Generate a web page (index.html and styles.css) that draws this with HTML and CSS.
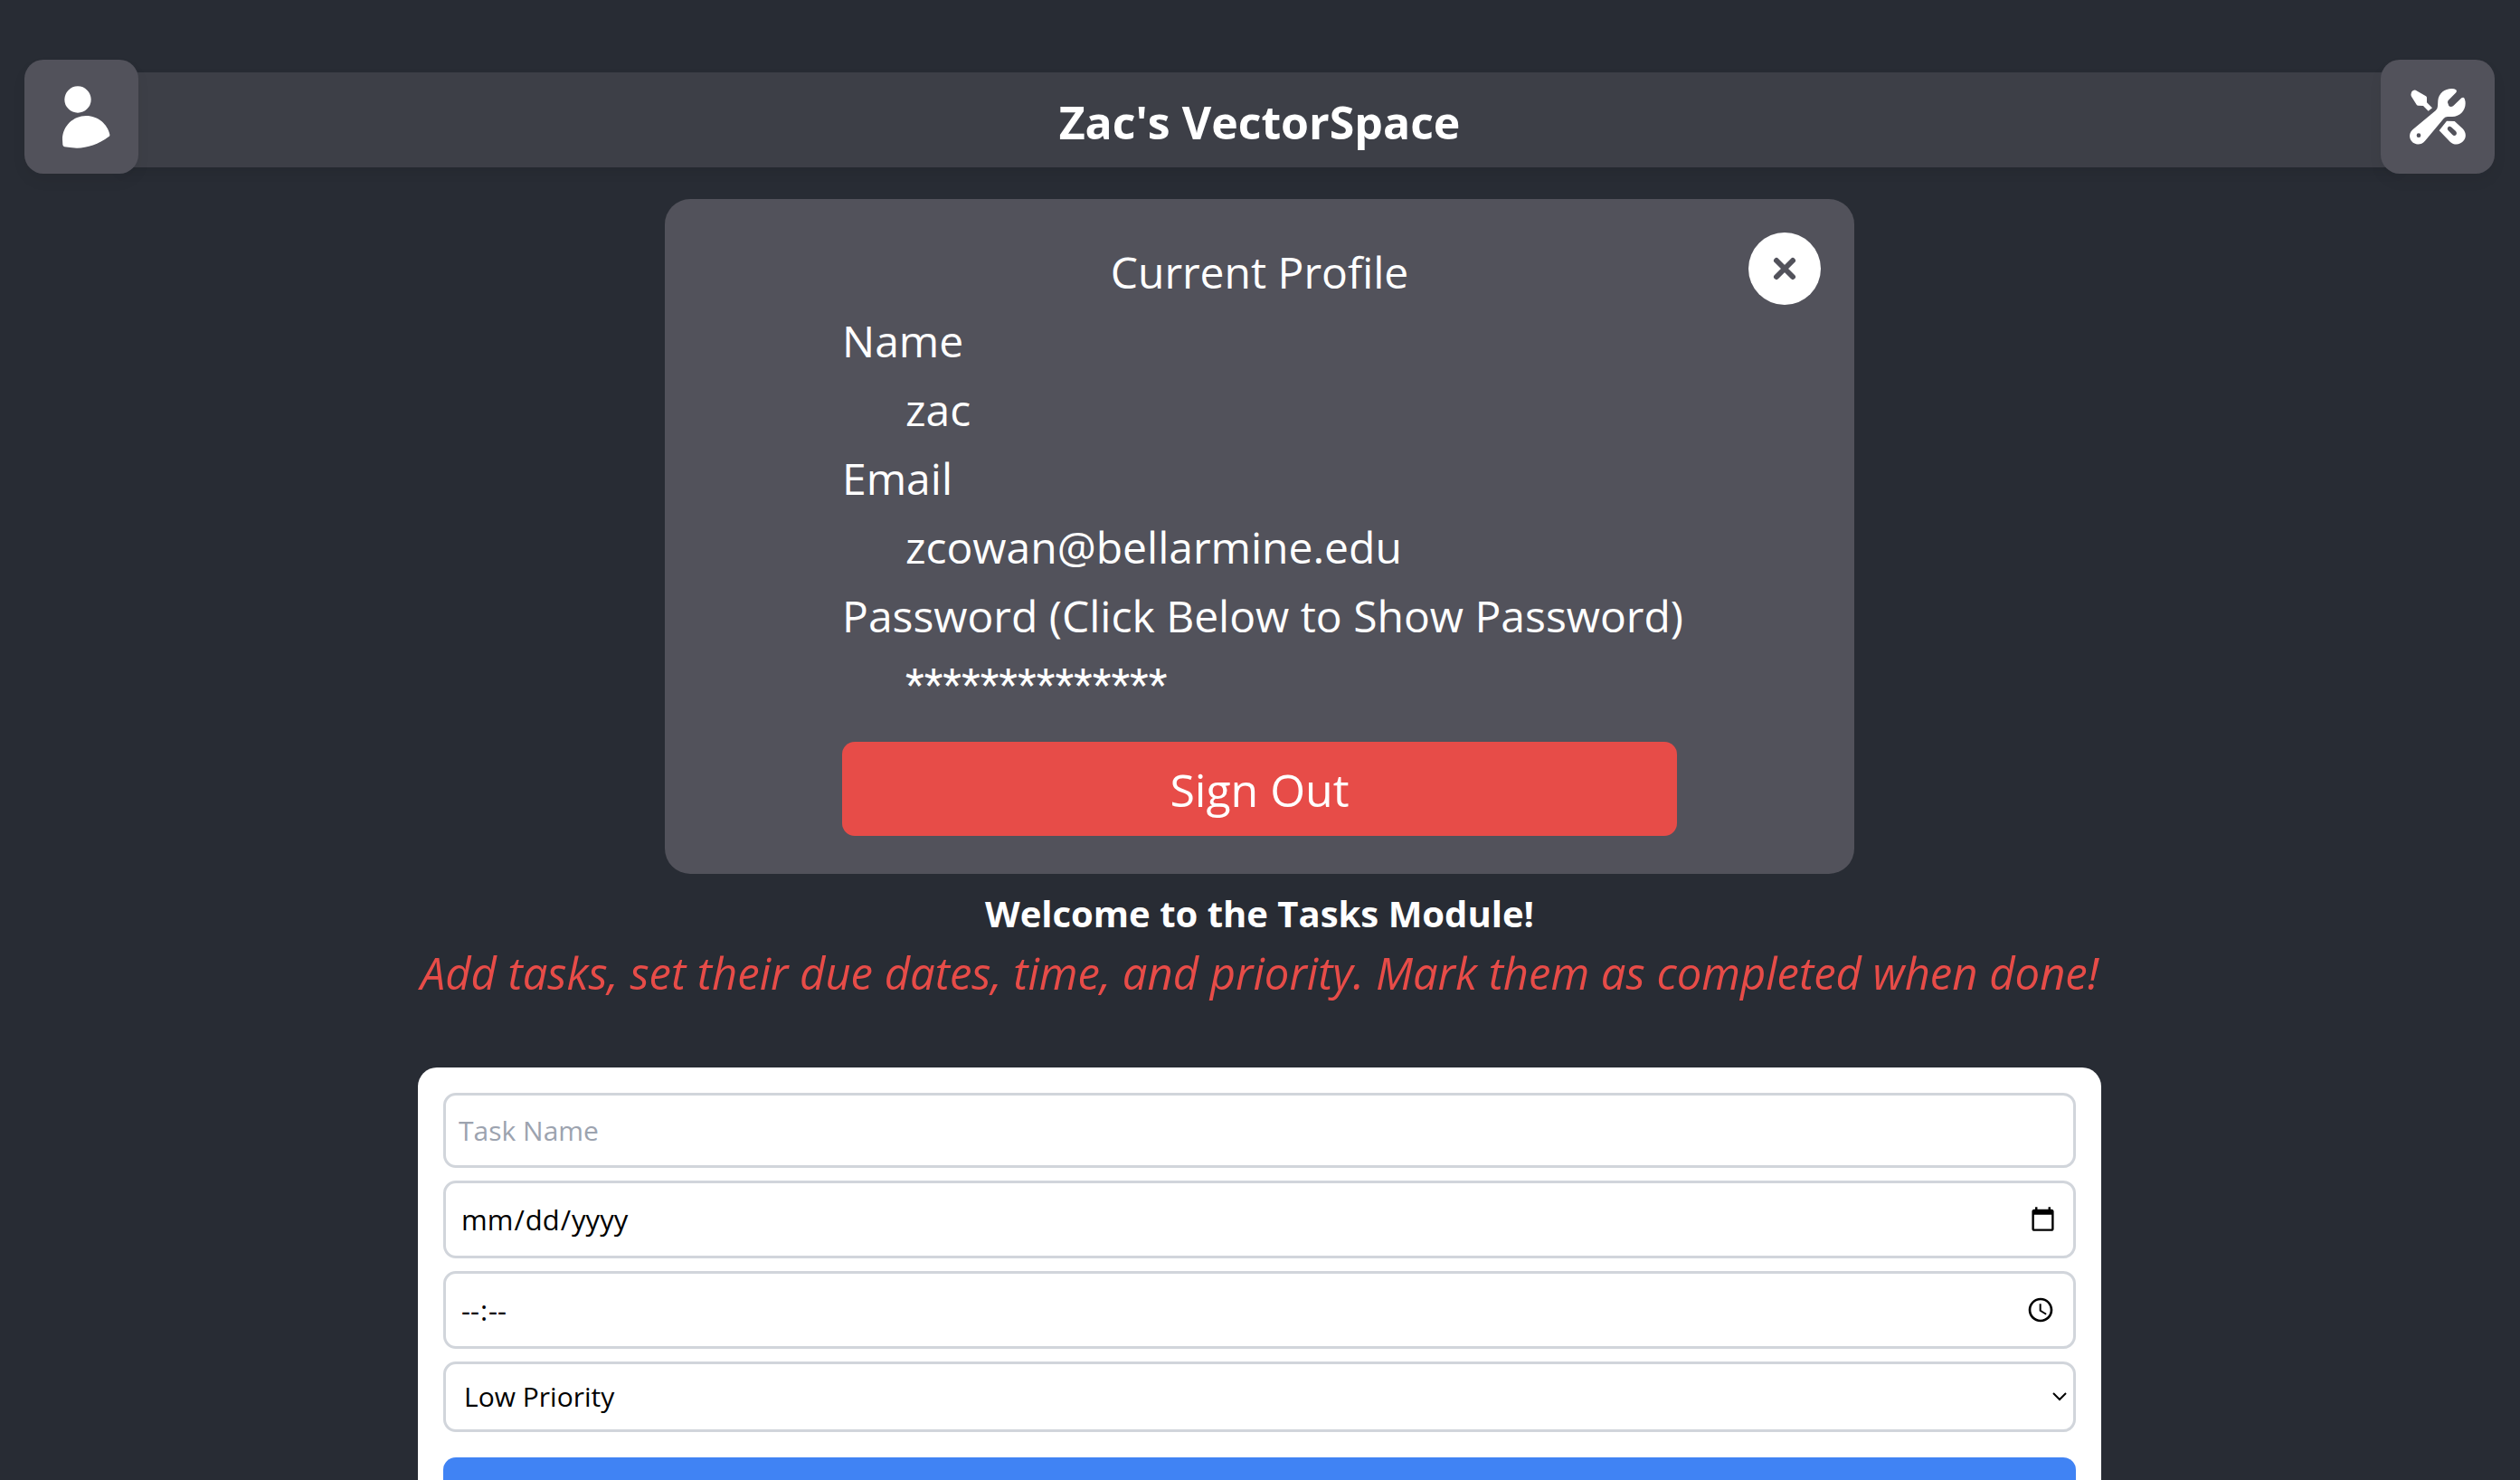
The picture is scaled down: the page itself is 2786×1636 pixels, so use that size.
FILE: index.html
```html
<!DOCTYPE html>
<html lang="en">
<head>
  <meta charset="utf-8">
  <meta name="viewport" content="width=device-width, initial-scale=1">
  <title>Zac's VectorSpace</title>
  <link rel="stylesheet" href="styles.css">
</head>
<body>
  <header class="topbar">
    <button class="icon-button" type="button" aria-label="Profile">
      <svg viewBox="81 78 378 378" aria-hidden="true">
        <circle cx="258" cy="210" r="44"/>
        <path d="M207 343C207 298 243 264 286 264C325 264 357 292 364 326Q365 331 361 333C327 358 290 371 255 371Q230 370 214 367Q209 366 208 360Z"/>
      </svg>
    </button>
    <div class="title-bar"><h1 class="title">Zac's VectorSpace</h1></div>
    <button class="icon-button" type="button" aria-label="Tools">
      <svg viewBox="216 78 378 378" aria-hidden="true">
        <path d="M317 190L319 184Q325 177 332 179L366 199Q369 201 369 204V220L387 238L374 248L357 231L340 230Q337 230 335 227L318 200Q315 195 317 190Z"/>
        <path fill-rule="evenodd" d="M466 178Q470 182 466 187L440 213Q438 216 438 220L442 231Q444 234 450 234L456 232L484 205Q491 201 494 207Q497 215 497 223C497 248 478 267 453 267H438Q430 267 425 273L363 347C350 362 330 362 319 349C309 337 310 320 323 309L398 247Q405 241 405 232L406 213C408 190 428 174 452 174Q460 174 466 178ZM342 322A7 7 0 1 0 342 336A7 7 0 1 0 342 322Z"/>
        <path fill-rule="evenodd" d="M410 313L435 281L461 282L488 307C501 321 500 338 489 349C478 361 459 362 446 350ZM440 301C436 305 437 309 440 313L454 327C458 331 463 330 466 327C469 323 468 319 465 315L451 302C447 299 443 299 440 301Z"/>
      </svg>
    </button>
  </header>

  <main class="content">
    <section class="profile">
      <button class="close" type="button" aria-label="Close">
        <svg viewBox="0 0 80 80" aria-hidden="true"><path d="M31 31L49 49M49 31L31 49"/></svg>
      </button>
      <h2 class="profile-title">Current Profile</h2>
      <dl class="details">
        <dt>Name</dt>
        <dd>zac</dd>
        <dt>Email</dt>
        <dd>zcowan@bellarmine.edu</dd>
        <dt>Password (Click Below to Show Password)</dt>
        <dd class="masked">**************</dd>
      </dl>
      <button class="sign-out" type="button">Sign Out</button>
    </section>

    <h2 class="welcome">Welcome to the Tasks Module!</h2>
    <p class="intro">Add tasks, set their due dates, time, and priority. Mark them as completed when done!</p>

    <form class="task-form">
      <input class="field field-name" type="text" placeholder="Task Name" aria-label="Task name">
      <input class="field field-picker" type="date" aria-label="Due date">
      <input class="field field-picker" type="time" aria-label="Due time">
      <div class="select-wrap">
        <select class="field field-select" aria-label="Priority">
          <option>Low Priority</option>
          <option>Medium Priority</option>
          <option>High Priority</option>
        </select>
        <svg class="chevron" viewBox="0 0 16 10" aria-hidden="true"><path d="M1 1L8 8L15 1"/></svg>
      </div>
      <button class="add" type="submit" aria-label="Add task"></button>
    </form>
  </main>
</body>
</html>
```
FILE: styles.css
```css
* {
  box-sizing: border-box;
  margin: 0;
}

body {
  height: 100vh;
  overflow: hidden;
  padding: 66px 28px 0 27px;
  background: #282c34;
  color: #fff;
  font-family: "Open Sans", "Noto Sans", sans-serif;
  font-size: 48px;
  line-height: 76px;
}

button,
input,
select {
  font: inherit;
  border: 0;
}

.topbar {
  display: flex;
  align-items: center;
}

.icon-button {
  flex: none;
  width: 126px;
  height: 126px;
  padding: 0;
  border-radius: 21px;
  background: #52525b;
  box-shadow: 0 8px 16px rgba(0, 0, 0, 0.05);
  z-index: 1;
}

.icon-button svg {
  display: block;
  fill: #fff;
}

.title-bar {
  flex: 1;
  height: 105px;
  margin: 7px -21px 0;
  background: #3d3f47;
  box-shadow: 0 6px 12px rgba(0, 0, 0, 0.08);
}

.title {
  font-size: 50px;
  line-height: 110px;
  text-align: center;
}

.content {
  display: flex;
  flex-direction: column;
  align-items: center;
}

.profile {
  position: relative;
  display: flex;
  flex-direction: column;
  width: 100%;
  max-width: 1315px;
  margin-top: 28px;
  padding: 43px 196px 42px;
  border-radius: 28px;
  background: #52525b;
}

.close {
  position: absolute;
  top: 37px;
  right: 37px;
  width: 80px;
  height: 80px;
  padding: 0;
  border-radius: 50%;
  background: #fff;
}

.close svg {
  display: block;
  fill: none;
  stroke: #52525b;
  stroke-width: 6;
  stroke-linecap: round;
}

.profile-title {
  font-size: 48px;
  font-weight: 400;
  text-align: center;
}

.details {
  white-space: nowrap;
}

.details dd {
  margin-left: 70px;
}

.details .masked {
  font-family: Roboto, sans-serif;
}

.sign-out {
  height: 104px;
  margin-top: 25px;
  padding: 2px 0 0;
  border-radius: 14px;
  background: #e74c48;
  color: #fff;
  font-size: 50px;
}

.welcome {
  margin-top: 14px;
  font-size: 40px;
  line-height: 60px;
}

.intro {
  color: #e74c48;
  font-size: 49px;
  font-style: italic;
  line-height: 70px;
  white-space: nowrap;
}

.task-form {
  display: flex;
  flex-direction: column;
  gap: 14px;
  width: 100%;
  max-width: 1861px;
  margin-top: 70px;
  padding: 28px;
  border-radius: 21px;
  background: #fff;
  color: #000;
  font-size: 30px;
  line-height: 42px;
}

.field {
  display: block;
  width: 100%;
  border: 3px solid #d1d5db;
  border-radius: 14px;
  background: #fff;
  color: #000;
}

.field-name {
  height: 83px;
  padding: 0 14px;
}

.field-name::placeholder {
  color: #9ca3af;
}

.field-picker {
  height: 86px;
  padding: 0 16px;
  font-size: 31px;
}

.field-picker::-webkit-datetime-edit-ampm-field {
  display: none;
}

.select-wrap {
  position: relative;
}

.field-select {
  height: 78px;
  padding: 0 20px;
  appearance: none;
}

.chevron {
  position: absolute;
  top: 34px;
  right: 10px;
  width: 16px;
  height: 10px;
  fill: none;
  stroke: #000;
  stroke-width: 2;
}

.add {
  height: 98px;
  margin-top: 14px;
  border-radius: 14px;
  background: #4083f4;
}
```
